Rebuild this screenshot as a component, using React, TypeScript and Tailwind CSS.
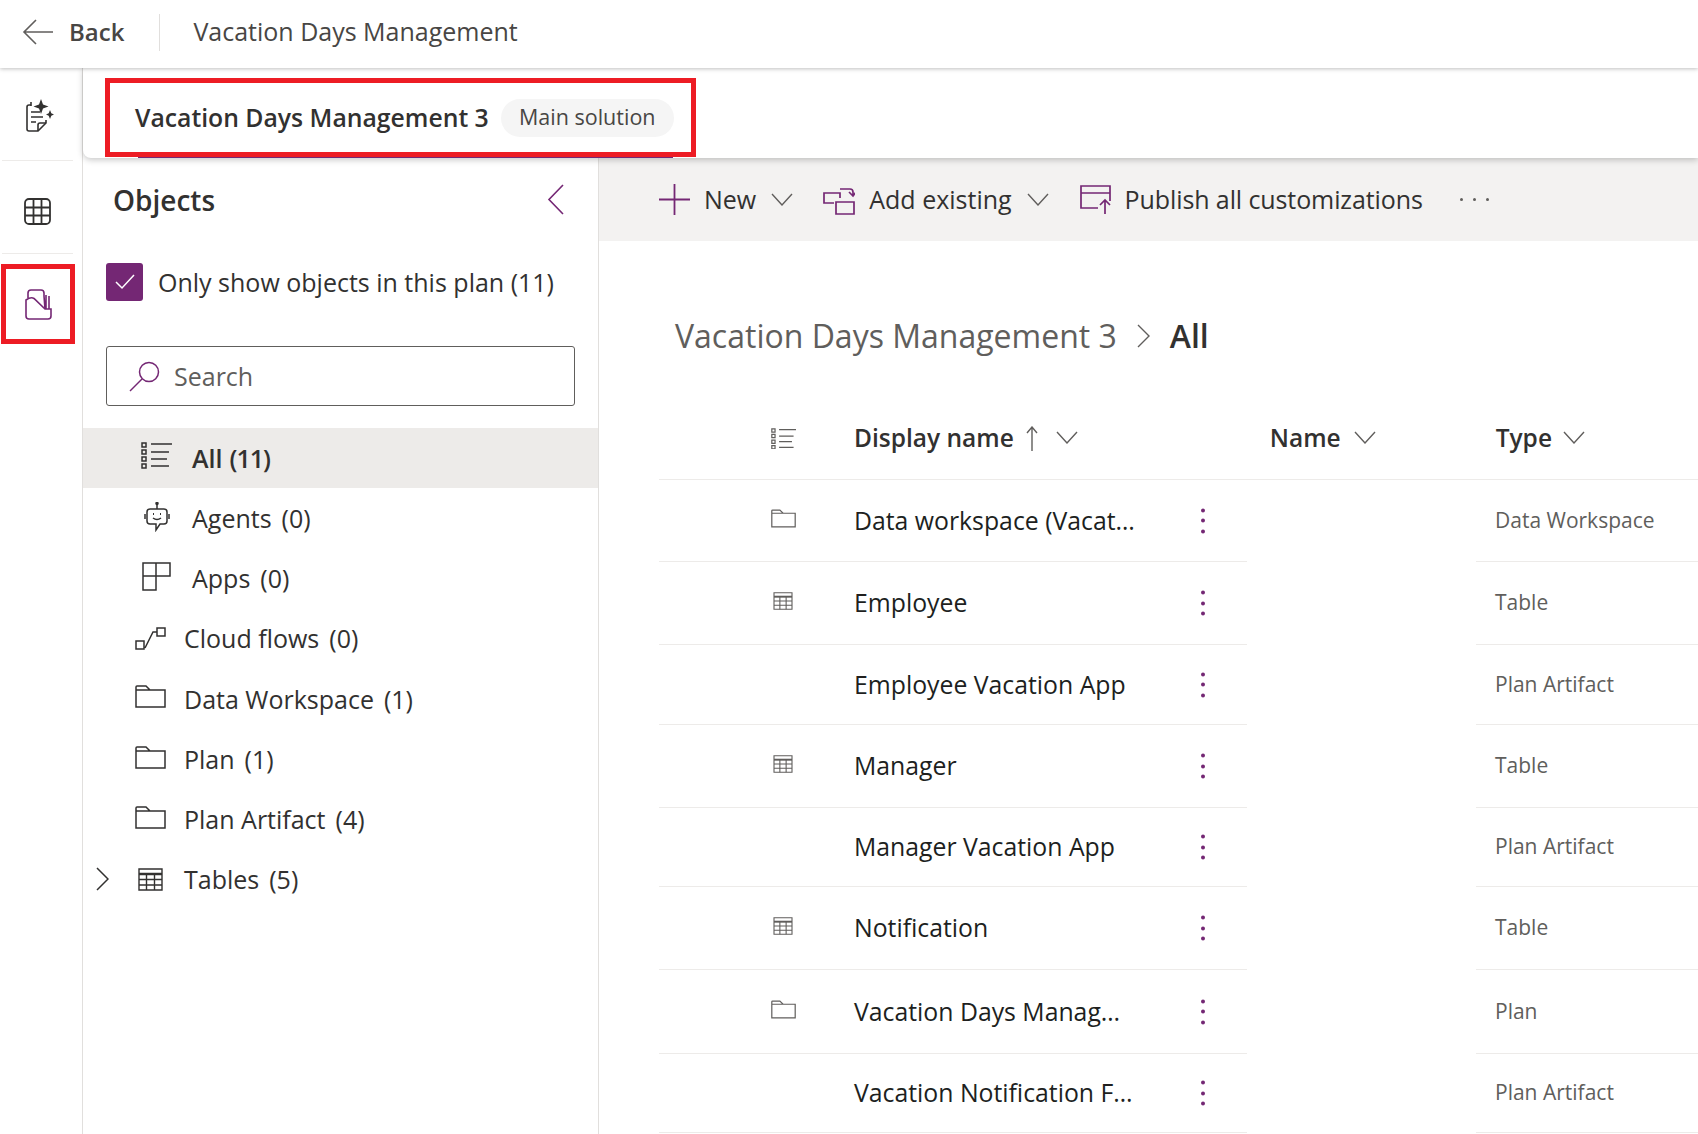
// Vacation Days Management - solution objects view
const PURPLE = '#742774'
const INK = '#323130'
const GREY = '#605e5c'

type IconProps = { className?: string }

function BackArrow({ className }: IconProps) {
  return (
    <svg className={className} width="32" height="28" viewBox="0 0 32 28" fill="none" stroke={GREY} strokeWidth="1.6">
      <path d="M2 14H31M14 2 2 14l12 12" />
    </svg>
  )
}

function NotesSparkle({ className }: IconProps) {
  return (
    <svg className={className} width="28" height="34" viewBox="0 0 28 34" fill="none" stroke={INK} strokeWidth="1.6">
      <path d="M5 6H3Q1 6 1 8v22q0 2 2 2h9l8-8v-3" />
      <path d="M12 32v-6q0-2 2-2h6" />
      <path d="M5 3v4M5 13h9M5 18h12M5 23h5" />
      <path fill={INK} stroke="none" d="M15 0l2 5.5 5.500 2-5.500 2-2 5.500-2-5.500-5.500-2 5.500-2zM24 11l1.300 3.200L28 15.500l-2.700 1.300L24 20l-1.300-3.200-2.700-1.300 2.700-1.300z" />
    </svg>
  )
}

function GridTable({ className }: IconProps) {
  return (
    <svg className={className} width="27" height="27" viewBox="0 0 27 27" fill="none" stroke={INK} strokeWidth="1.8">
      <rect x="1" y="1" width="25" height="25" rx="4" />
      <path d="M9.500 1v25M17.500 1v25M1 9.500h25M1 17.500h25" />
    </svg>
  )
}

function PlanObjects({ className }: IconProps) {
  return (
    <svg className={className} width="27" height="31" viewBox="0 0 27 31" fill="none" stroke={PURPLE} strokeWidth="1.6">
      <path d="M1 11V27q0 3 3 3h19q3 0 3-3v-7h-6L9 9.500Q6 7.500 1 11z" />
      <path d="M3 9V4q0-3 3-3h10q3 0 3 3v3l1 13M21 6v14M24 7v13" />
    </svg>
  )
}

function SearchGlass({ className }: IconProps) {
  return (
    <svg className={className} width="31" height="31" viewBox="0 0 31 31" fill="none" stroke={PURPLE} strokeWidth="1.5">
      <circle cx="20" cy="11" r="9.500" />
      <path d="M13 18 1 30" />
    </svg>
  )
}

function ListLines({ className, size = 31, color = INK }: IconProps & { size?: number; color?: string }) {
  return (
    <svg className={className} width={size} height={size * 0.87} viewBox="0 0 31 27" fill="none" stroke={color} strokeWidth="1.500">
      <path d="M1 1h4v4H1zM1 8h4v4H1zM1 15h4v4H1zM1 22h4v4H1z" />
      <path d="M10 2h21M10 10h18M10 17h16M10 24h18" />
    </svg>
  )
}

function Agent({ className }: IconProps) {
  return (
    <svg className={className} width="26" height="30" viewBox="0 0 26 30" fill="none" stroke={INK} strokeWidth="1.500">
      <path d="M13 1v6" />
      <circle cx="13" cy="1.500" r="1" fill={INK} />
      <path d="M6 7h14q3 0 3 3v9q0 3-3 3h-4l-4 6v-6H6q-3 0-3-3v-9q0-3 3-3z" />
      <path d="M1 12v5M25 12v5M9 16q4 3 8 0" />
      <path d="M9 12h1M16 12h1" strokeWidth="2" />
    </svg>
  )
}

function Apps({ className }: IconProps) {
  return (
    <svg className={className} width="29" height="29" viewBox="0 0 29 29" fill="none" stroke={INK} strokeWidth="1.500">
      <path d="M1 1h27v13H14v14H1zM14 1v13M1 14h13" />
    </svg>
  )
}

function Flow({ className }: IconProps) {
  return (
    <svg className={className} width="31" height="23" viewBox="0 0 31 23" fill="none" stroke={INK} strokeWidth="1.500">
      <path d="M1 14h8v8H1zM22 1h8v8h-8zM10 21 18 5h4" />
    </svg>
  )
}

function Folder({ className, w = 31, h = 23, color = INK }: IconProps & { w?: number; h?: number; color?: string }) {
  return (
    <svg className={className} width={w} height={h} viewBox="0 0 31 23" fill="none" stroke={color} strokeWidth="1.500">
      <path d="M1 5V2q0-1 1-1h9l4 4h15v17H1zM1 5h14" />
    </svg>
  )
}

function TableSmall({ className, w = 25, h = 23, color = INK }: IconProps & { w?: number; h?: number; color?: string }) {
  return (
    <svg className={className} width={w} height={h} viewBox="0 0 25 23" fill="none" stroke={color} strokeWidth="1.400">
      <path d="M1 1h23v21H1z" />
      <path d="M1 6h23" strokeWidth="2.500" />
      <path d="M1 11.500h23M1 17h23M8.500 6v16M16.500 6v16" />
    </svg>
  )
}

function ChevronDown({ className, w = 22 }: IconProps & { w?: number }) {
  return (
    <svg className={className} width={w} height="13" viewBox="0 0 22 13" fill="none" stroke={GREY} strokeWidth="1.400">
      <path d="M1 1l10 11L21 1" />
    </svg>
  )
}

function Kebab() {
  return (
    <div className="flex flex-col gap-[6.5px]">
      <div className="w-[4px] h-[4px] rounded-full bg-[#742774]" />
      <div className="w-[4px] h-[4px] rounded-full bg-[#742774]" />
      <div className="w-[4px] h-[4px] rounded-full bg-[#742774]" />
    </div>
  )
}

const navItems = [
  { label: 'All', count: '(11)', active: true, pad: 'pl-[58px]', box: 'w-[51px]', icon: <ListLines className="mb-[6px]" /> },
  { label: 'Agents', count: '(0)', pad: 'pl-[61px]', box: 'w-[48px]', icon: <Agent className="mb-[2px]" /> },
  { label: 'Apps', count: '(0)', pad: 'pl-[59px]', box: 'w-[50px]', icon: <Apps className="mb-[4px]" /> },
  { label: 'Cloud flows', count: '(0)', pad: 'pl-[52px]', box: 'w-[49px]', icon: <Flow /> },
  { label: 'Data Workspace', count: '(1)', pad: 'pl-[52px]', box: 'w-[49px]', icon: <Folder className="mb-[4px]" /> },
  { label: 'Plan', count: '(1)', pad: 'pl-[52px]', box: 'w-[49px]', icon: <Folder className="mb-[4px]" /> },
  { label: 'Plan Artifact', count: '(4)', pad: 'pl-[52px]', box: 'w-[49px]', icon: <Folder className="mb-[4px]" /> },
  { label: 'Tables', count: '(5)', pad: 'pl-[13px]', box: 'w-[46px]', chevron: true, icon: <TableSmall /> },
]

const rows = [
  { name: 'Data workspace (Vacat…', type: 'Data Workspace', h: 'h-[82px]', icon: 'folder' },
  { name: 'Employee', type: 'Table', h: 'h-[83px]', icon: 'table' },
  { name: 'Employee Vacation App', type: 'Plan Artifact', h: 'h-[80px]', icon: '' },
  { name: 'Manager', type: 'Table', h: 'h-[83px]', icon: 'table' },
  { name: 'Manager Vacation App', type: 'Plan Artifact', h: 'h-[79px]', icon: '' },
  { name: 'Notification', type: 'Table', h: 'h-[83px]', icon: 'table' },
  { name: 'Vacation Days Manag…', type: 'Plan', h: 'h-[84px]', icon: 'folder' },
  { name: 'Vacation Notification F…', type: 'Plan Artifact', h: 'h-[79px]', icon: '' },
]

function ObjectsPanel() {
  return (
    <aside className="w-[516px] shrink-0 border-r border-[#e1dfdd] bg-white">
      <div className="h-[83px] flex items-center justify-between pl-[30px] pr-[33px]">
        <h2 className="text-[28px] font-semibold text-[#323130]">Objects</h2>
        <svg width="18" height="31" viewBox="0 0 18 31" fill="none" stroke={PURPLE} strokeWidth="1.600">
          <path d="M16 1 2 15.500 16 30" />
        </svg>
      </div>
      <div className="ml-[23px] mt-[22px] flex items-center h-[38px]">
        <div className="w-[37px] h-[38px] rounded-[3px] bg-[#742774] flex items-center justify-center">
          <svg width="20" height="16" viewBox="0 0 20 16" fill="none" stroke="#fff" strokeWidth="1.500">
            <path d="M1 8l6 6L19 1" />
          </svg>
        </div>
        <span className="ml-[15px] pt-[2px] text-[25px] text-[#323130]">Only show objects in this plan (11)</span>
      </div>
      <div className="ml-[23px] mt-[45px] w-[469px] h-[60px] border border-[#605e5c] rounded-[3px] flex items-center pl-[22px]">
        <SearchGlass />
        <span className="ml-[14px] pt-[2px] text-[25px] text-[#605e5c]">Search</span>
      </div>
      <nav className="mt-[22px]">
        {navItems.map((item) => (
          <div
            key={item.label}
            className={`h-[60.200px] flex items-center ${item.pad} ${item.active ? 'bg-[#edebe9]' : ''}`}
          >
            {item.chevron && (
              <svg className="mr-[29px]" width="13" height="24" viewBox="0 0 13 24" fill="none" stroke={INK} strokeWidth="1.500">
                <path d="M1 1l11 11L1 23" />
              </svg>
            )}
            <div className={`${item.box} shrink-0 flex items-center`}>{item.icon}</div>
            <span className={`pt-[1px] text-[25px] text-[#323130] ${item.active ? 'font-semibold' : ''}`}>
              {item.label}
              <span className={item.active ? 'ml-[7px] tracking-[-1px]' : 'ml-[10px]'}>{item.count}</span>
            </span>
          </div>
        ))}
      </nav>
    </aside>
  )
}

function CommandBar() {
  return (
    <div className="h-[83px] bg-[#f3f2f1] flex items-center pl-[60px] text-[25px] text-[#323130]">
      <svg width="31" height="31" viewBox="0 0 31 31" fill="none" stroke={PURPLE} strokeWidth="1.800">
        <path d="M15.500 0v31M0 15.500h31" />
      </svg>
      <span className="ml-[14px]">New</span>
      <ChevronDown className="ml-[15px]" />
      <svg className="ml-[30px]" width="32" height="30" viewBox="0 0 32 30" fill="none" stroke={PURPLE} strokeWidth="1.700">
        <path d="M11 18H1V8h16v5" />
        <path d="M13 17h18v12H13z" />
        <path d="M17 4h10q3 0 3 3v4M26 7l4 4 3-4" />
      </svg>
      <span className="ml-[14px]">Add existing</span>
      <ChevronDown className="ml-[15px]" />
      <svg className="ml-[31px]" width="31" height="29" viewBox="0 0 31 29" fill="none" stroke={PURPLE} strokeWidth="1.700">
        <path d="M18 23H1V1h29v15M1 8h29" />
        <path d="M25 29V15M20 20l5-5 5 5" />
      </svg>
      <span className="ml-[14px] tracking-[-0.1px]">Publish all customizations</span>
      <div className="ml-[37px] flex gap-[10px]">
        <div className="w-[3px] h-[3px] rounded-full bg-[#605e5c]" />
        <div className="w-[3px] h-[3px] rounded-full bg-[#605e5c]" />
        <div className="w-[3px] h-[3px] rounded-full bg-[#605e5c]" />
      </div>
    </div>
  )
}

function ObjectTable() {
  return (
    <div className="ml-[60px]">
      <div className="h-[70px] pb-[12px] border-b border-[#edebe9] flex items-center text-[24.500px] font-semibold text-[#323130]">
        <ListLines className="ml-[112px]" size={25} color={GREY} />
        <span className="ml-[58px]">Display name</span>
        <svg className="ml-[12px]" width="12" height="25" viewBox="0 0 12 25" fill="none" stroke={GREY} strokeWidth="1.400">
          <path d="M6 25V1M1 7l5-6 5 6" />
        </svg>
        <ChevronDown className="ml-[18px] mb-[3px]" />
        <span className="ml-[192px]">Name</span>
        <ChevronDown className="ml-[13px] mb-[3px]" />
        <span className="ml-[120px]">Type</span>
        <ChevronDown className="ml-[11px] mb-[3px]" />
      </div>
      {rows.map((row) => (
        <div key={row.name} className={`${row.h} flex`}>
          <div className="w-[588px] border-b border-[#edebe9] flex items-center relative">
            <div className="w-[112px] shrink-0" />
            <div className="w-[84px] shrink-0 flex items-center">
              {row.icon === 'folder' && <Folder w={25} h={19} color={GREY} className="mb-[4px]" />}
              {row.icon === 'table' && <TableSmall w={20} h={18} color={GREY} className="ml-[2px] mb-[4px]" />}
            </div>
            <span className="text-[24.800px] -ml-px text-[#201f1e]">{row.name}</span>
            <div className="absolute left-[542px] top-1/2 -translate-y-1/2">
              <Kebab />
            </div>
          </div>
          <div className="w-[229px] shrink-0" />
          <div className="flex-1 border-b border-[#edebe9] flex items-center pl-[19px] text-[21px] text-[#605e5c]">
            {row.type}
          </div>
        </div>
      ))}
    </div>
  )
}

export default function App() {
  return (
    <div className="w-[1698px] h-[1134px] overflow-hidden bg-white flex flex-col font-['Open_Sans','Noto_Sans',sans-serif]">
      <header className="h-[68px] shrink-0 pb-[4px] flex items-center bg-white relative z-20 shadow-[0_1px_4px_rgba(0,0,0,0.25)]">
        <BackArrow className="ml-[22px]" />
        <span className="ml-[15px] text-[24px] font-semibold text-[#484644]">Back</span>
        <div className="ml-[35px] w-px h-[37px] bg-[#e1dfdd]" />
        <span className="ml-[33px] text-[25px] text-[#484644]">Vacation Days Management</span>
      </header>
      <div className="flex-1 flex min-h-0">
        <div className="w-[83px] shrink-0 border-r border-[#e1dfdd] flex flex-col relative">
          <div className="h-[92px] pt-[4px] flex items-center justify-center pr-[2px]">
            <NotesSparkle />
          </div>
          <div className="mx-[2px] w-[71px] h-px bg-[#edebe9]" />
          <div className="h-[92px] pt-[8px] flex items-center justify-center pr-[7px]">
            <GridTable />
          </div>
          <div className="mx-[2px] w-[71px] h-px bg-[#edebe9]" />
          <div className="h-[100px] flex items-center justify-center pr-[5px]">
            <PlanObjects />
          </div>
          <div className="absolute left-[1px] top-[196px] w-[74px] h-[80px] border-[5px] border-[#ed1c24]" />
        </div>
        <div className="flex-1 flex flex-col min-w-0">
          <div className="h-[90px] shrink-0 pt-[9px] bg-white rounded-bl-lg relative z-10 shadow-[0_2px_6px_rgba(0,0,0,0.22)] flex items-center pl-[52px]">
            <span className="text-[24.750px] font-semibold text-[#323130]">Vacation Days Management 3</span>
            <span className="ml-[12px] h-[38px] w-[173px] justify-center rounded-full bg-[#f5f5f5] flex items-center text-[21.500px] text-[#484644]">
              Main solution
            </span>
            <div className="absolute left-[55px] bottom-0 w-[535px] h-px bg-[#742774]" />
            <div className="absolute left-[22px] top-[10px] w-[591px] h-[79px] border-[5px] border-[#ed1c24]" />
          </div>
          <div className="flex-1 flex min-h-0">
            <ObjectsPanel />
            <main className="flex-1 min-w-0">
              <CommandBar />
              <div className="h-[169px] flex items-center pl-[76px] pt-[21px]">
                <span className="text-[32px] text-[#605e5c]">Vacation Days Management 3</span>
                <svg className="ml-[20px]" width="13" height="24" viewBox="0 0 13 24" fill="none" stroke={GREY} strokeWidth="1.400">
                  <path d="M1 1l11 11L1 23" />
                </svg>
                <span className="ml-[20px] text-[32px] font-semibold text-[#323130]">All</span>
              </div>
              <ObjectTable />
            </main>
          </div>
        </div>
      </div>
    </div>
  )
}
